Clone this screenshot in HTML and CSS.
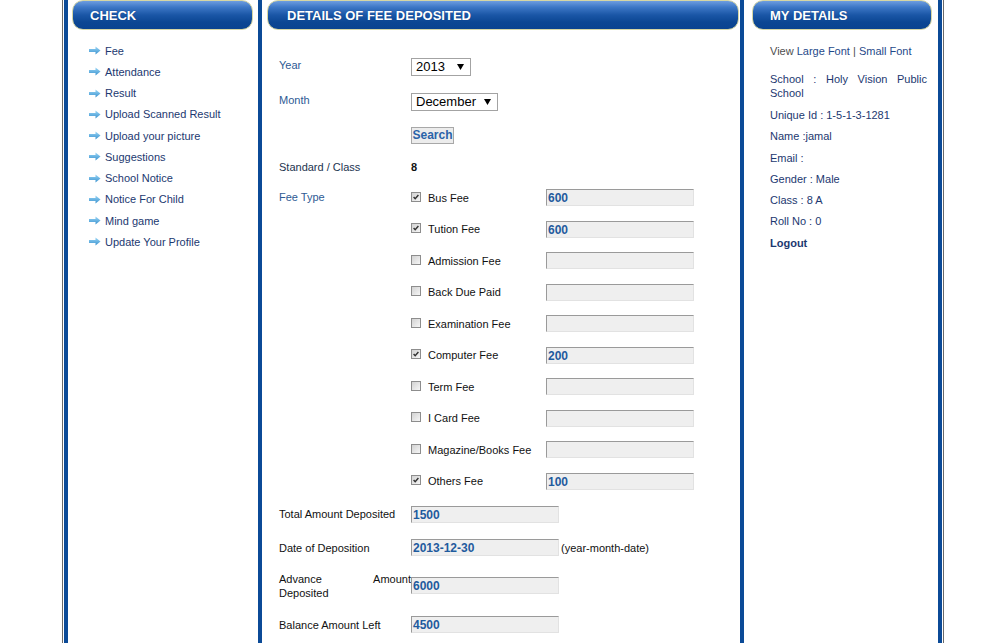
FILE: index.html
```html
<!DOCTYPE html>
<html>
<head>
<meta charset="utf-8">
<title>Details of Fee Deposited</title>
<link rel="stylesheet" href="styles.css">
</head>
<body>
<div class="wrap">
  <div class="col left">
    <div class="hdr hdr-left">CHECK</div>
    <ul class="menu">
      <li><svg class="arr" viewBox="0 0 12 9"><defs><linearGradient id="ag" x1="0" y1="0" x2="0" y2="1"><stop offset="0" stop-color="#9ad6f6"/><stop offset="1" stop-color="#3a92cf"/></linearGradient></defs><path d="M0 3h6.5V0.5L11.5 4.5 6.5 8.5V6H0z" fill="url(#ag)"/></svg><a>Fee</a></li>
      <li><svg class="arr" viewBox="0 0 12 9"><path d="M0 3h6.5V0.5L11.5 4.5 6.5 8.5V6H0z" fill="url(#ag)"/></svg><a>Attendance</a></li>
      <li><svg class="arr" viewBox="0 0 12 9"><path d="M0 3h6.5V0.5L11.5 4.5 6.5 8.5V6H0z" fill="url(#ag)"/></svg><a>Result</a></li>
      <li><svg class="arr" viewBox="0 0 12 9"><path d="M0 3h6.5V0.5L11.5 4.5 6.5 8.5V6H0z" fill="url(#ag)"/></svg><a>Upload Scanned Result</a></li>
      <li><svg class="arr" viewBox="0 0 12 9"><path d="M0 3h6.5V0.5L11.5 4.5 6.5 8.5V6H0z" fill="url(#ag)"/></svg><a>Upload your picture</a></li>
      <li><svg class="arr" viewBox="0 0 12 9"><path d="M0 3h6.5V0.5L11.5 4.5 6.5 8.5V6H0z" fill="url(#ag)"/></svg><a>Suggestions</a></li>
      <li><svg class="arr" viewBox="0 0 12 9"><path d="M0 3h6.5V0.5L11.5 4.5 6.5 8.5V6H0z" fill="url(#ag)"/></svg><a>School Notice</a></li>
      <li><svg class="arr" viewBox="0 0 12 9"><path d="M0 3h6.5V0.5L11.5 4.5 6.5 8.5V6H0z" fill="url(#ag)"/></svg><a>Notice For Child</a></li>
      <li><svg class="arr" viewBox="0 0 12 9"><path d="M0 3h6.5V0.5L11.5 4.5 6.5 8.5V6H0z" fill="url(#ag)"/></svg><a>Mind game</a></li>
      <li><svg class="arr" viewBox="0 0 12 9"><path d="M0 3h6.5V0.5L11.5 4.5 6.5 8.5V6H0z" fill="url(#ag)"/></svg><a>Update Your Profile</a></li>
    </ul>
  </div>

  <div class="col mid">
    <div class="hdr hdr-mid">DETAILS OF FEE DEPOSITED</div>
    <div class="form">
      <div class="row h-year">
        <div class="lbl blue">Year</div>
        <div class="ctl"><span class="sel sel-year">2013<svg class="tri" viewBox="0 0 7 6"><path d="M0 0h7L3.5 6z"/></svg></span></div>
      </div>
      <div class="row h-month">
        <div class="lbl blue">Month</div>
        <div class="ctl"><span class="sel sel-month">December<svg class="tri" viewBox="0 0 7 6"><path d="M0 0h7L3.5 6z"/></svg></span></div>
      </div>
      <div class="row h-search">
        <div class="lbl"></div>
        <div class="ctl"><span class="btn">Search</span></div>
      </div>
      <div class="row h-std">
        <div class="lbl dark">Standard / Class</div>
        <div class="ctl"><b class="std">8</b></div>
      </div>
      <div class="row fee-block">
        <div class="lbl blue fee-lbl">Fee Type</div>
        <div class="fees">
          <div class="fee"><span class="cb on"><svg viewBox="0 0 10 10"><path d="M2 5l2 2.2L8 2.5" fill="none" stroke="#333" stroke-width="1.8"/></svg></span><span class="fname">Bus Fee</span><span class="box">600</span></div>
          <div class="fee"><span class="cb on"><svg viewBox="0 0 10 10"><path d="M2 5l2 2.2L8 2.5" fill="none" stroke="#333" stroke-width="1.8"/></svg></span><span class="fname">Tution Fee</span><span class="box">600</span></div>
          <div class="fee"><span class="cb"></span><span class="fname">Admission Fee</span><span class="box"></span></div>
          <div class="fee"><span class="cb"></span><span class="fname">Back Due Paid</span><span class="box"></span></div>
          <div class="fee"><span class="cb"></span><span class="fname">Examination Fee</span><span class="box"></span></div>
          <div class="fee"><span class="cb on"><svg viewBox="0 0 10 10"><path d="M2 5l2 2.2L8 2.5" fill="none" stroke="#333" stroke-width="1.8"/></svg></span><span class="fname">Computer Fee</span><span class="box">200</span></div>
          <div class="fee"><span class="cb"></span><span class="fname">Term Fee</span><span class="box"></span></div>
          <div class="fee"><span class="cb"></span><span class="fname">I Card Fee</span><span class="box"></span></div>
          <div class="fee"><span class="cb"></span><span class="fname">Magazine/Books Fee</span><span class="box"></span></div>
          <div class="fee"><span class="cb on"><svg viewBox="0 0 10 10"><path d="M2 5l2 2.2L8 2.5" fill="none" stroke="#333" stroke-width="1.8"/></svg></span><span class="fname">Others Fee</span><span class="box">100</span></div>
        </div>
      </div>
      <div class="row h-total">
        <div class="lbl">Total Amount Deposited</div>
        <div class="ctl"><span class="box">1500</span></div>
      </div>
      <div class="row h-date">
        <div class="lbl">Date of Deposition</div>
        <div class="ctl"><span class="box">2013-12-30</span><span class="hint">(year-month-date)</span></div>
      </div>
      <div class="row h-adv">
        <div class="lbl just">Advance Amount Deposited</div>
        <div class="ctl"><span class="box">6000</span></div>
      </div>
      <div class="row h-bal">
        <div class="lbl">Balance Amount Left</div>
        <div class="ctl"><span class="box">4500</span></div>
      </div>
    </div>
  </div>

  <div class="col right">
    <div class="hdr hdr-right">MY DETAILS</div>
    <div class="info">
      <p class="view">View <a>Large Font</a> | <a>Small Font</a></p>
      <p class="school">School : Holy Vision Public School</p>
      <ul class="facts">
        <li>Unique Id : 1-5-1-3-1281</li>
        <li>Name :jamal</li>
        <li>Email :</li>
        <li>Gender : Male</li>
        <li>Class : 8 A</li>
        <li>Roll No : 0</li>
        <li class="logout">Logout</li>
      </ul>
    </div>
  </div>
</div>
</body>
</html>
```

FILE: styles.css
```css
html, body {
  margin: 0;
  padding: 0;
  background: #ffffff;
  overflow: hidden;
}
body {
  font-family: "Liberation Sans", Arial, sans-serif;
  font-size: 11px;
  color: #1c3870;
}
.wrap {
  margin-left: 62px;
  width: 882px;
  height: 643px;
  border-left: 1px solid #6a6a6a;
  border-right: 1px solid #6a6a6a;
  padding: 0 1px;
  box-sizing: border-box;
  display: flex;
}
.col {
  border-left: 4px solid #0b4a97;
  height: 100%;
}
.left { width: 190px; }
.mid { width: 478px; }
.right {
  width: 194px;
  border-right: 4px solid #0b4a97;
}

/* headers */
.hdr {
  height: 30px;
  box-sizing: border-box;
  border: 1px solid #d6d6a4;
  border-radius: 11px;
  background: linear-gradient(to bottom, #6d9de0 0%, #3d77c6 22%, #1a56a6 50%, #0c4794 75%, #0a4390 100%);
  color: #ffffff;
  font-weight: bold;
  font-size: 13px;
  line-height: 29px;
  text-shadow: 0 0 1px #0a3b7d;
}
.hdr-left { margin: 0 5px 0 4px; padding-left: 17px; }
.hdr-mid { margin: 0 1px 0 5px; padding-left: 19px; }
.hdr-right { margin: 0 6px 0 8px; padding-left: 17px; }

/* left menu */
.menu {
  list-style: none;
  margin: 0;
  padding: 10px 0 0 21px;
}
.menu li {
  height: 21.25px;
  display: flex;
  align-items: center;
}
.menu .arr {
  width: 12px;
  height: 9px;
  margin-right: 4px;
  flex: none;
}
.menu a {
  color: #1c3870;
}

/* middle form */
.form {
  padding: 19px 0 0 17px;
}
.row {
  display: flex;
  align-items: center;
}
.lbl {
  width: 132px;
  flex: none;
  line-height: 14px;
  color: #111111;
}
.lbl.blue { color: #2d5a94; }
.lbl.dark { color: #22344f; }
.h-year, .h-month { height: 35px; }
.h-year .lbl, .h-month .lbl { margin-bottom: 4px; }
.h-search { height: 33px; }
.h-std { height: 30px; }
.h-total { height: 34px; }
.h-date { height: 33px; }
.h-adv { height: 43px; }
.h-bal { height: 35px; }
.ctl {
  display: flex;
  align-items: center;
}
.sel {
  height: 18px;
  box-sizing: border-box;
  border: 1px solid #a3a3a3;
  background: #ffffff;
  color: #000000;
  font-size: 13px;
  line-height: 16px;
  padding-left: 4px;
  padding-right: 6px;
  display: flex;
  align-items: center;
  justify-content: space-between;
}
.sel-year { width: 60px; }
.sel-month { width: 87px; }
.tri {
  width: 7px;
  height: 6px;
  fill: #000000;
}
.btn {
  width: 43px;
  height: 17px;
  box-sizing: border-box;
  border: 1px solid #a8a8a8;
  background: #ececec;
  color: #2a63a8;
  font-weight: bold;
  font-size: 12px;
  line-height: 15px;
  text-align: center;
}
.std {
  color: #111111;
  font-size: 11px;
}
.fee-block {
  align-items: flex-start;
}
.fee-lbl {
  line-height: 31.5px;
}
.fee {
  height: 31.5px;
  display: flex;
  align-items: center;
}
.cb {
  width: 10px;
  height: 10px;
  box-sizing: border-box;
  border: 1px solid #8d8d8d;
  background: linear-gradient(to bottom right, #d2d2d2, #f6f6f6);
  margin-right: 7px;
  margin-top: -2px;
  flex: none;
  display: flex;
}
.cb svg {
  width: 8px;
  height: 8px;
}
.fname {
  width: 118px;
  color: #111111;
}
.box {
  width: 148px;
  height: 17px;
  box-sizing: border-box;
  border-top: 1px solid #9a9a9a;
  border-left: 1px solid #9a9a9a;
  border-right: 1px solid #e2e2e2;
  border-bottom: 1px solid #e2e2e2;
  background: #efefef;
  color: #1f5b9e;
  font-weight: bold;
  font-size: 12px;
  line-height: 16px;
  padding-left: 1px;
  flex: none;
}
.hint {
  margin-left: 2px;
  color: #111111;
}
.just {
  text-align: justify;
}

/* right info */
.info {
  padding: 14px 11px 0 26px;
}
.info p {
  margin: 0;
  line-height: 14px;
}
.view { color: #4d4d4d; }
.view a { color: #1f4a8a; }
.info .school {
  margin-top: 14px;
  text-align: justify;
}
.facts {
  list-style: none;
  margin: 5px 0 0 0;
  padding: 0;
}
.facts li {
  line-height: 21.3px;
}
.logout { font-weight: bold; }
```
